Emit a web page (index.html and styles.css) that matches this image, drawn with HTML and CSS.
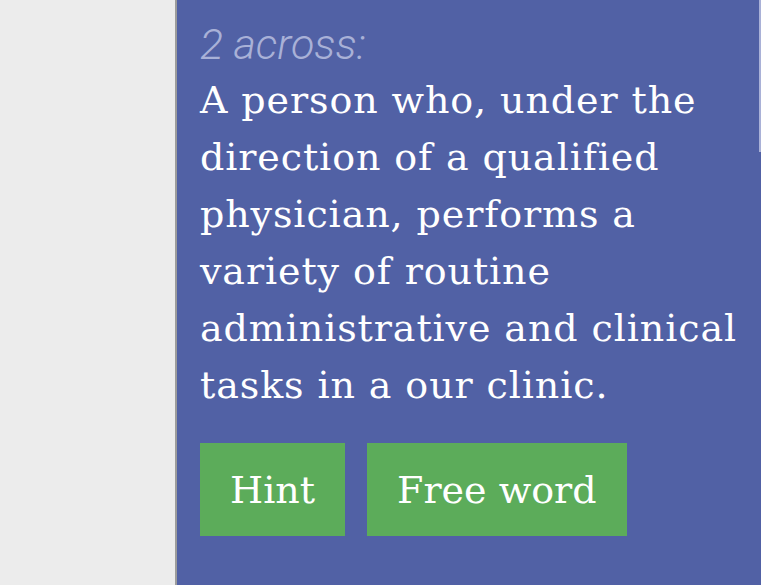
FILE: index.html
```html
<!DOCTYPE html>
<html lang="en">
<head>
<meta charset="utf-8">
<title>Crossword clue</title>
<link rel="stylesheet" href="styles.css">
</head>
<body>
<div class="layout">
  <aside class="sidebar"></aside>
  <main class="clue-panel">
    <div class="clue-label">2 across:</div>
    <p class="clue-text">A person who, under the<br>direction of a qualified<br>physician, performs a<br>variety of routine<br>administrative and clinical<br>tasks in a our clinic.</p>
    <div class="actions">
      <button class="btn btn-hint">Hint</button>
      <button class="btn btn-free">Free word</button>
    </div>
    <div class="scroll-thumb"></div>
  </main>
</div>
</body>
</html>
```
FILE: styles.css
```css
html, body {
  margin: 0;
  padding: 0;
  height: 100%;
  overflow: hidden;
}
.layout {
  display: flex;
  height: 585px;
}
.sidebar {
  width: 175px;
  flex: none;
  background: #ececec;
  border-right: 2px solid #9c9c9c;
}
.clue-panel {
  position: relative;
  flex: 1;
  background: #5161a5;
  padding: 18px 0 0 23px;
}
.clue-label {
  font-family: Roboto, "Liberation Sans", sans-serif;
  font-style: italic;
  font-weight: 300;
  font-size: 43px;
  line-height: 52px;
  color: #a9b1d7;
}
.clue-text {
  margin: 2px 0 0 0;
  font-family: "DejaVu Serif", serif;
  font-size: 38px;
  letter-spacing: 0.9px;
  line-height: 57px;
  color: #ffffff;
  white-space: nowrap;
}
.actions {
  display: flex;
  gap: 22px;
  margin-top: 29px;
}
.btn {
  height: 93px;
  border: none;
  background: #5cac5a;
  color: #ffffff;
  font-family: "DejaVu Serif", serif;
  font-size: 38px;
  padding: 0 30px;
  cursor: pointer;
}
.scroll-thumb {
  position: absolute;
  top: 0;
  right: 0;
  width: 2px;
  height: 152px;
  background: #a9b1d7;
}
```
